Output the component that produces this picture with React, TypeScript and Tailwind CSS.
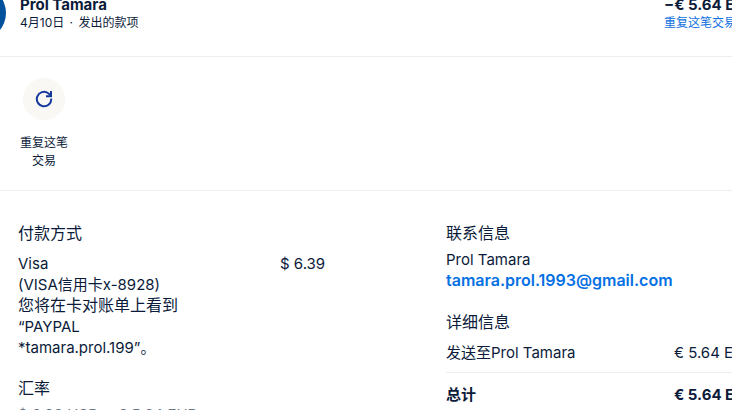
import React from "react";

interface LineItem {
  label: string;
  amount: string;
  total?: boolean;
}

const details: LineItem[] = [
  { label: "发送至Prol Tamara", amount: "€ 5.64 EUR" },
  { label: "总计", amount: "€ 5.64 EUR", total: true },
];

const RepeatIcon = () => (
  <svg
    viewBox="0 0 18 18"
    className="size-[18px]"
    fill="none"
    stroke="#14389a"
    strokeWidth="2"
    aria-hidden="true"
  >
    <path d="M16.2 8.6a7.2 7.2 0 1 1-3-5.4L15.8 5.2" />
    <path d="M16 1v5.2h-5" />
  </svg>
);

const App = () => {
  return (
    <div className="h-screen overflow-hidden bg-white font-['Inter','Noto_Sans_CJK_SC',sans-serif] text-[15px] leading-[21px] text-[#0b1b3a]">
      <main className="-mr-6">
        <header className="-mt-[14px] flex items-start border-b border-[#eeeeec] pb-4">
          <div className="-ml-12 mr-3.5 size-[54px] shrink-0 rounded-full bg-[#01509c]" />
          <div className="flex-1 pt-2">
            <h1 className="font-bold">Prol Tamara</h1>
            <p className="text-xs">
              4月10日 <span className="mx-0.5">·</span> 发出的款项
            </p>
          </div>
          <div className="w-[92px] shrink-0 pt-2">
            <p className="whitespace-nowrap font-bold">−€ 5.64 EUR</p>
            <a href="#repeat" className="block text-xs text-[#1070e0]">
              重复这笔交易
            </a>
          </div>
        </header>

        <section className="border-b border-[#eeeeec] px-4 pt-[21px] pb-5">
          <button
            type="button"
            className="flex w-14 flex-col items-center gap-3.5 text-xs leading-[18px]"
          >
            <span className="flex size-[42px] items-center justify-center rounded-full bg-[#faf8f5]">
              <RepeatIcon />
            </span>
            <span className="w-12">重复这笔交易</span>
          </button>
        </section>

        <div className="flex pl-[18px] pt-8">
          <div className="w-[428px] shrink-0">
            <section>
              <h2 className="text-base leading-[21px]">付款方式</h2>
              <div className="mt-[9px] flex items-start">
                <div className="w-[262px]">
                  <p>Visa</p>
                  <p>(VISA信用卡x-8928)</p>
                  <p className="text-base leading-[21px]">您将在卡对账单上看到</p>
                  <p>“PAYPAL</p>
                  <p>*tamara.prol.199”。</p>
                </div>
                <p>$ 6.39</p>
              </div>
            </section>
            <section className="mt-5">
              <h2 className="text-base leading-[21px]">汇率</h2>
              <p className="mt-[5px] text-[#6b7588]">$ 6.39 USD = € 5.64 EUR</p>
            </section>
          </div>

          <div className="min-w-0 flex-1">
            <section>
              <h2 className="text-base leading-[21px]">联系信息</h2>
              <p className="mt-[5px]">Prol Tamara</p>
              <a
                href="mailto:tamara.prol.1993@gmail.com"
                className="block text-base leading-[21px] font-semibold text-[#0570e3]"
              >
                tamara.prol.1993@gmail.com
              </a>
            </section>
            <section className="mt-[21px]">
              <h2 className="text-base leading-[21px]">详细信息</h2>
              <dl className="mt-[9px]">
                {details.map((item) => (
                  <div
                    key={item.label}
                    className={
                      item.total
                        ? "flex border-t border-[#eeeeec] pt-[11px] font-bold"
                        : "flex pb-[9px]"
                    }
                  >
                    <dt className="flex-1">{item.label}</dt>
                    <dd className="w-[82px] whitespace-nowrap">{item.amount}</dd>
                  </div>
                ))}
              </dl>
            </section>
          </div>
        </div>
      </main>
    </div>
  );
};

export default App;
